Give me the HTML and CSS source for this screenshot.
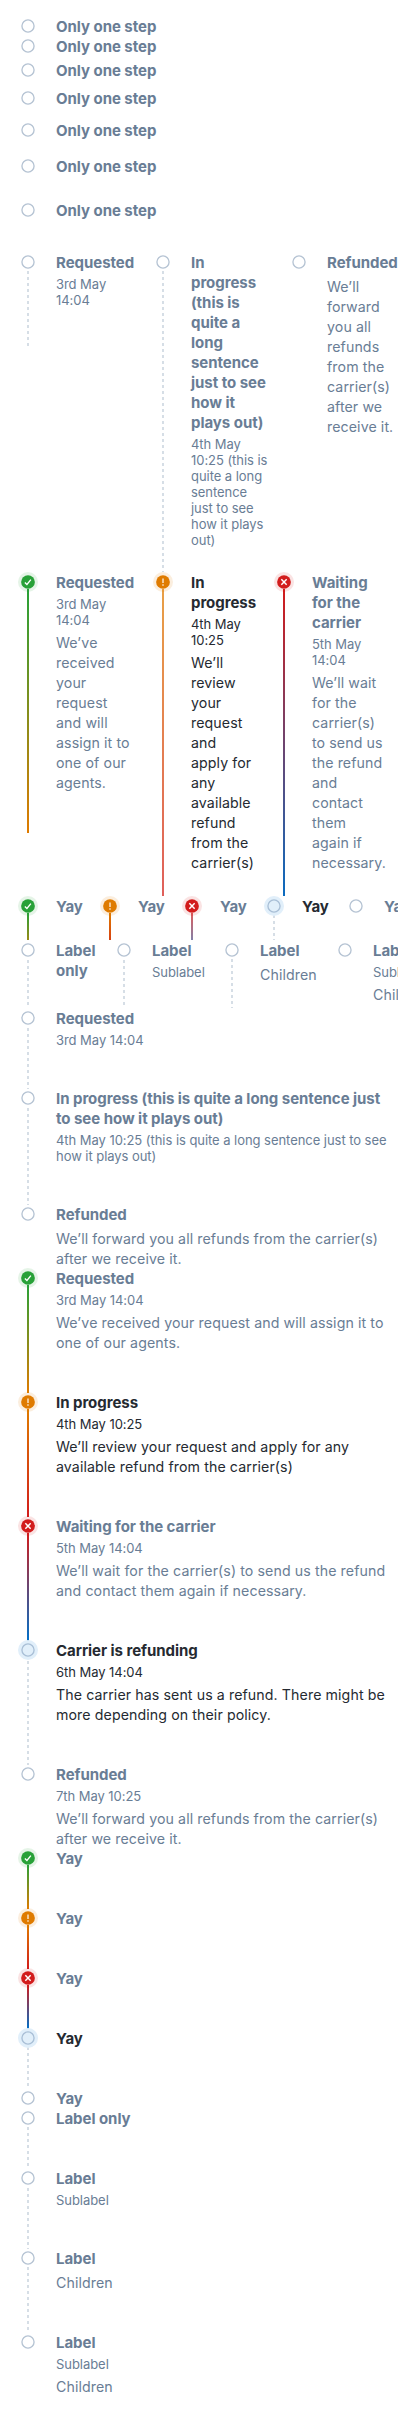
FILE: index.html
```html
<!DOCTYPE html>
<html lang="en">
<head>
<meta charset="utf-8">
<title>Progress steps</title>
<link rel="stylesheet" href="styles.css">
</head>
<body>
<svg class="sprite" aria-hidden="true">
  <symbol id="empty" viewBox="0 0 24 24"><circle cx="12" cy="12" r="9.1" fill="none" stroke="currentColor" stroke-width="2"/></symbol>
  <symbol id="check" viewBox="0 0 24 24"><circle cx="12" cy="12" r="10.3" fill="currentColor"/><path d="M7.3 12.6l3.1 3 5.9-7.2" fill="none" stroke="#fff" stroke-width="2"/></symbol>
  <symbol id="alert" viewBox="0 0 24 24"><circle cx="12" cy="12" r="10.3" fill="currentColor"/><path d="M12 6.6v6.9M12 15.2v2.4" fill="none" stroke="#fff" stroke-opacity=".8" stroke-width="2.2"/></symbol>
  <symbol id="close" viewBox="0 0 24 24"><circle cx="12" cy="12" r="10.3" fill="currentColor"/><path d="M8 8l8 8M16 8l-8 8" fill="none" stroke="#fff" stroke-width="2.2"/></symbol>
</svg>
<main class="page">
  <section class="singles">
    <div class="step"><div class="mark"><svg><use href="#empty"/></svg></div><div class="body"><h4>Only one step</h4></div></div>
    <div class="step"><div class="mark"><svg><use href="#empty"/></svg></div><div class="body"><h4>Only one step</h4></div></div>
    <div class="step gap-4"><div class="mark"><svg><use href="#empty"/></svg></div><div class="body"><h4>Only one step</h4></div></div>
    <div class="step gap-8"><div class="mark"><svg><use href="#empty"/></svg></div><div class="body"><h4>Only one step</h4></div></div>
    <div class="step gap-12"><div class="mark"><svg><use href="#empty"/></svg></div><div class="body"><h4>Only one step</h4></div></div>
    <div class="step gap-16"><div class="mark"><svg><use href="#empty"/></svg></div><div class="body"><h4>Only one step</h4></div></div>
    <div class="step gap-24"><div class="mark"><svg><use href="#empty"/></svg></div><div class="body"><h4>Only one step</h4></div></div>
  </section>

  <section class="row cols-a">
    <div class="step"><div class="mark"><i class="line dots"></i><svg><use href="#empty"/></svg></div><div class="body"><h4>Requested</h4><small>3rd May 14:04</small></div></div>
    <div class="step"><div class="mark"><i class="line dots"></i><svg><use href="#empty"/></svg></div><div class="body"><h4>In progress (this is quite a long sentence just to see how it plays out)</h4><small>4th May 10:25 (this is quite a long sentence just to see how it plays out)</small></div></div>
    <div class="step"><div class="mark"><svg><use href="#empty"/></svg></div><div class="body"><h4>Refunded</h4><p>We’ll forward you all refunds from the carrier(s) after we receive it.</p></div></div>
  </section>

  <section class="row cols-b">
    <div class="step"><div class="mark success"><i class="line to-warning"></i><svg><use href="#check"/></svg></div><div class="body"><h4>Requested</h4><small>3rd May 14:04</small><p>We’ve received your request and will assign it to one of our agents.</p></div></div>
    <div class="step active"><div class="mark warning"><i class="line to-critical soft"></i><svg><use href="#alert"/></svg></div><div class="body"><h4>In progress</h4><small>4th May 10:25</small><p>We’ll review your request and apply for any available refund from the carrier(s)</p></div></div>
    <div class="step"><div class="mark critical"><i class="line to-info"></i><svg><use href="#close"/></svg></div><div class="body"><h4>Waiting for the carrier</h4><small>5th May 14:04</small><p>We’ll wait for the carrier(s) to send us the refund and contact them again if necessary.</p></div></div>
  </section>

  <section class="row cols-c">
    <div class="step"><div class="mark success"><i class="line to-warning"></i><svg><use href="#check"/></svg></div><div class="body"><h4>Yay</h4></div></div>
    <div class="step"><div class="mark warning"><i class="line to-critical"></i><svg><use href="#alert"/></svg></div><div class="body"><h4>Yay</h4></div></div>
    <div class="step"><div class="mark critical"><i class="line to-info soft"></i><svg><use href="#close"/></svg></div><div class="body"><h4>Yay</h4></div></div>
    <div class="step active"><div class="mark info"><i class="line dots"></i><svg><use href="#empty"/></svg></div><div class="body"><h4>Yay</h4></div></div>
    <div class="step"><div class="mark"><svg><use href="#empty"/></svg></div><div class="body"><h4>Yay</h4></div></div>
  </section>

  <section class="row cols-d">
    <div class="step"><div class="mark"><i class="line dots late"></i><svg><use href="#empty"/></svg></div><div class="body"><h4>Label only</h4></div></div>
    <div class="step"><div class="mark"><i class="line dots late"></i><svg><use href="#empty"/></svg></div><div class="body"><h4>Label</h4><small>Sublabel</small></div></div>
    <div class="step"><div class="mark"><i class="line dots"></i><svg><use href="#empty"/></svg></div><div class="body"><h4>Label</h4><p>Children</p></div></div>
    <div class="step"><div class="mark"><svg><use href="#empty"/></svg></div><div class="body"><h4>Label</h4><small>Sublabel</small><p>Children</p></div></div>
  </section>

  <section class="column">
    <div class="step"><div class="mark"><i class="line dots late"></i><svg><use href="#empty"/></svg></div><div class="body"><h4>Requested</h4><small>3rd May 14:04</small></div></div>
    <div class="step"><div class="mark"><i class="line dots late"></i><svg><use href="#empty"/></svg></div><div class="body"><h4>In progress (this is quite a long sentence just to see how it plays out)</h4><small>4th May 10:25 (this is quite a long sentence just to see how it plays out)</small></div></div>
    <div class="step"><div class="mark"><svg><use href="#empty"/></svg></div><div class="body"><h4>Refunded</h4><p>We’ll forward you all refunds from the carrier(s) after we receive it.</p></div></div>
  </section>

  <section class="column">
    <div class="step"><div class="mark success"><i class="line to-warning"></i><svg><use href="#check"/></svg></div><div class="body"><h4>Requested</h4><small>3rd May 14:04</small><p>We’ve received your request and will assign it to one of our agents.</p></div></div>
    <div class="step active"><div class="mark warning"><i class="line to-critical"></i><svg><use href="#alert"/></svg></div><div class="body"><h4>In progress</h4><small>4th May 10:25</small><p>We’ll review your request and apply for any available refund from the carrier(s)</p></div></div>
    <div class="step"><div class="mark critical"><i class="line to-info"></i><svg><use href="#close"/></svg></div><div class="body"><h4>Waiting for the carrier</h4><small>5th May 14:04</small><p>We’ll wait for the carrier(s) to send us the refund and contact them again if necessary.</p></div></div>
    <div class="step active"><div class="mark info"><i class="line dots later"></i><svg><use href="#empty"/></svg></div><div class="body"><h4>Carrier is refunding</h4><small>6th May 14:04</small><p>The carrier has sent us a refund. There might be more depending on their policy.</p></div></div>
    <div class="step"><div class="mark"><svg><use href="#empty"/></svg></div><div class="body"><h4>Refunded</h4><small>7th May 10:25</small><p>We’ll forward you all refunds from the carrier(s) after we receive it.</p></div></div>
  </section>

  <section class="column">
    <div class="step"><div class="mark success"><i class="line to-warning"></i><svg><use href="#check"/></svg></div><div class="body"><h4>Yay</h4></div></div>
    <div class="step"><div class="mark warning"><i class="line to-critical"></i><svg><use href="#alert"/></svg></div><div class="body"><h4>Yay</h4></div></div>
    <div class="step"><div class="mark critical"><i class="line to-info"></i><svg><use href="#close"/></svg></div><div class="body"><h4>Yay</h4></div></div>
    <div class="step active"><div class="mark info"><i class="line dots"></i><svg><use href="#empty"/></svg></div><div class="body"><h4>Yay</h4></div></div>
    <div class="step"><div class="mark"><svg><use href="#empty"/></svg></div><div class="body"><h4>Yay</h4></div></div>
  </section>

  <section class="column">
    <div class="step"><div class="mark"><i class="line dots"></i><svg><use href="#empty"/></svg></div><div class="body"><h4>Label only</h4></div></div>
    <div class="step"><div class="mark"><i class="line dots late"></i><svg><use href="#empty"/></svg></div><div class="body"><h4>Label</h4><small>Sublabel</small></div></div>
    <div class="step"><div class="mark"><i class="line dots"></i><svg><use href="#empty"/></svg></div><div class="body"><h4>Label</h4><p>Children</p></div></div>
    <div class="step"><div class="mark"><svg><use href="#empty"/></svg></div><div class="body"><h4>Label</h4><small>Sublabel</small><p>Children</p></div></div>
  </section>
</main>
</body>
</html>
```
FILE: styles.css
```css
:root {
  --muted: #697d95;
  --ink: #252a31;
  --ring: #b5c3d3;
  --dash: #d6dee6;
  --success: #28a138;
  --warning: #df7b00;
  --critical: #d21c1c;
  --info: #0070c9;
}

* { box-sizing: border-box; }

body {
  margin: 0;
  background: #fff;
  color: var(--muted);
  font-family: Inter, "Liberation Sans", sans-serif;
}

.sprite { display: none; }

.page { padding: 16px; }

.singles { margin-bottom: 32px; }
.gap-4 { margin-top: 4px; }
.gap-8 { margin-top: 8px; }
.gap-12 { margin-top: 12px; }
.gap-16 { margin-top: 16px; }
.gap-24 { margin-top: 24px; }

.step {
  display: flex;
  gap: 16px;
}

.active { color: var(--ink); }

.body {
  display: flex;
  flex-direction: column;
  flex: 1;
  min-width: 0;
}

h4, p, small {
  display: block;
  margin: 0;
}

h4 {
  margin-bottom: -1px;
  padding-top: 1px;
  font-size: 15px;
  font-weight: 700;
  line-height: 20px;
  letter-spacing: -0.04px;
}

small {
  margin-top: 4px;
  font-size: 13px;
  line-height: 16px;
  letter-spacing: -0.05px;
}

p {
  margin: 4px 0 -1px;
  padding-top: 1px;
  font-size: 14.2px;
  line-height: 20px;
  letter-spacing: 0.09px;
}

/* Marker: status icon with an optional halo and connector line */
.mark {
  position: relative;
  flex: none;
  width: 24px;
  padding: 0 2px;
  color: var(--ring);
}

.mark svg {
  position: relative;
  display: block;
  width: 20px;
  height: 20px;
  padding: 2px;
  border-radius: 50%;
}

.success { color: var(--success); }
.warning { color: var(--warning); }
.critical { color: var(--critical); }
.success svg { background: rgba(40, 161, 56, 0.12); }
.warning svg { background: rgba(223, 123, 0, 0.13); }
.critical svg { background: rgba(210, 28, 28, 0.12); }
.info svg { background: #e1effa; color: #a9bfd6; }

.line {
  position: absolute;
  top: 17px;
  bottom: -41px;
  left: 11px;
  width: 2px;
}

.to-warning { background: linear-gradient(var(--success), var(--warning)); }
.to-critical { background: linear-gradient(var(--warning), var(--critical)); }
.to-info { background: linear-gradient(var(--critical), var(--info)); }
.soft { opacity: 0.72; }

.dots {
  background: linear-gradient(var(--dash) 50%, transparent 50%) 0 2px / 2px 6px repeat-y;
  clip-path: inset(2px 0 0);
}
.late { background-position-y: 3px; }
.later { background-position-y: 4px; }

/* Horizontal rows crop their overflowing steps and lines */
.row {
  display: grid;
  align-items: start;
  overflow: hidden;
}

.row .step { padding: 0 16px 24px 0; }
.row .step:last-child { padding: 0; }

.cols-a { grid-template-columns: 135px 136px 112px; }
.cols-b { grid-template-columns: 135px 121px 130px; }
.cols-b .step:last-child { padding: 0 16px 24px 0; }
.cols-c { grid-template-columns: repeat(5, 82px); }
.cols-d { grid-template-columns: 96px 108px 113px 120px; }

.column .step { padding-bottom: 40px; }
.column .step:last-child { padding-bottom: 0; }
```
